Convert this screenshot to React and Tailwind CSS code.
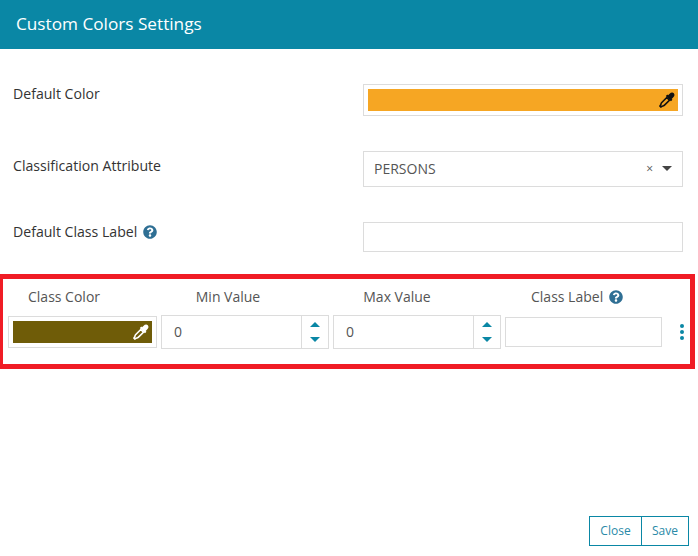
import React from 'react';
import { FaQuestionCircle } from 'react-icons/fa';

function Help({ className }) {
  return <FaQuestionCircle className={`text-[#2f6f94] text-[14px] ${className || ''}`} />;
}

// eyedropper with a hollow glass, the packaged ones are solid
function Dropper({ color }) {
  return (
    <svg width="16" height="16" viewBox="0 0 15 15">
      <path d="M10 1.6C11.1.3 12.9.2 13.9 1.1 14.8 2 14.7 3.8 13.4 5L11.9 6.5 12.6 7.2 11.2 8.6 6.4 3.8 7.8 2.4 8.5 3.1z" fill={color} />
      <path d="M7.3 5.2L2.4 10.1C1.9 10.6 1.8 11.3 1.7 12L.9 13.2 1.8 14.1 3 13.3C3.7 13.2 4.4 13.1 4.9 12.6L9.8 7.7z" fill="none" stroke={color} strokeWidth="1.5" />
    </svg>
  );
}

function ColorBox({ color, iconColor, className }) {
  return (
    <div className={`border border-[#dcdcdc] p-1 ${className}`}>
      <div className="h-full flex items-center justify-end pr-[3px]" style={{ backgroundColor: color }}>
        <Dropper color={iconColor} />
      </div>
    </div>
  );
}

function NumberBox() {
  return (
    <div className="w-[168px] h-[34px] border border-[#dcdcdc] flex">
      <div className="flex-1 flex items-center pl-3 text-[14px] text-[#555] pb-[2px]">0</div>
      <div className="w-[27px] border-l border-[#dcdcdc] flex flex-col items-center justify-center gap-[10px]">
        <svg width="10" height="5" viewBox="0 0 10 5"><path d="M5 0L10 5H0z" fill="#0a87a5" /></svg>
        <svg width="10" height="5" viewBox="0 0 10 5"><path d="M5 5L0 0h10z" fill="#0a87a5" /></svg>
      </div>
    </div>
  );
}

export default function App() {
  return (
    <div className="w-[698px] h-[556px] overflow-hidden bg-white flex flex-col font-['Open_Sans',sans-serif] text-[#444]">
      <div className="h-[49px] bg-[#0a87a5] flex items-center pl-4 pb-[2px] text-white text-[17.2px] font-medium">
        Custom Colors Settings
      </div>

      <div className="pl-[13px] pr-[15px] pt-[35px]">
        <div className="flex justify-between h-[32px]">
          <div className="text-[14.1px] font-medium text-[#333] leading-5">Default Color</div>
          <ColorBox color="#f6a623" iconColor="#111" className="w-[320px] h-[32px]" />
        </div>
        <div className="flex justify-between mt-[35px] h-[36px]">
          <div className="text-[14.1px] font-medium text-[#333] leading-5 mt-[5px]">Classification Attribute</div>
          <div className="w-[320px] border border-[#dcdcdc] flex items-center pl-[10px] pr-[10px] pb-[2px] text-[14px] text-[#555]">
            <span className="flex-1">PERSONS</span>
            <span className="text-[12px] mr-[9px] mt-[2px]">×</span>
            <svg width="10" height="5" viewBox="0 0 10 5"><path d="M0 0h10L5 5z" fill="#444" /></svg>
          </div>
        </div>
        <div className="flex justify-between mt-[35px] h-[30px]">
          <div className="text-[14.1px] font-medium text-[#333] leading-5 flex items-center gap-[6px] self-start">
            Default Class Label <Help />
          </div>
          <div className="w-[320px] border border-[#dcdcdc]" />
        </div>
      </div>

      <div className="ml-[-2px] w-[697px] h-[95px] mt-[22px] border-[5px] border-[#f01c25] pl-[5px] text-[14px] text-[#555]">
        <div className="flex h-[36px] items-center pb-[1px]">
          <div className="w-[153px] pl-[20px]">Class Color</div>
          <div className="w-[172px] text-center pr-[38px]">Min Value</div>
          <div className="w-[172px] text-center pr-[44px]">Max Value</div>
          <div className="flex items-center gap-[6px] pl-[26px]">Class Label <Help /></div>
        </div>
        <div className="flex items-center gap-1">
          <ColorBox color="#6f5c08" iconColor="#fff" className="w-[149px] h-[32px]" />
          <NumberBox />
          <NumberBox />
          <div className="w-[157px] h-[30px] border border-[#dcdcdc]" />
          <div className="ml-[14px] flex flex-col gap-[2px]">
            <span className="w-[4px] h-[4px] rounded-full bg-[#0a87a5]" />
            <span className="w-[4px] h-[4px] rounded-full bg-[#0a87a5]" />
            <span className="w-[4px] h-[4px] rounded-full bg-[#0a87a5]" />
          </div>
        </div>
      </div>

      <div className="flex justify-end pr-[9px] mt-[147px]">
        <div className="flex h-[30px] border border-[#0a87a5] text-[12px] text-[#2a8aa8]">
          <button className="w-[52px] border-r border-[#0a87a5]">Close</button>
          <button className="w-[46px]">Save</button>
        </div>
      </div>
    </div>
  );
}
